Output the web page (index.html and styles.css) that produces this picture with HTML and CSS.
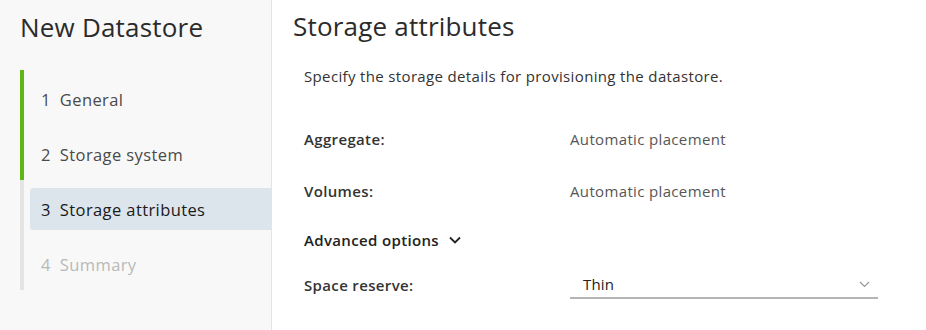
FILE: index.html
```html
<!DOCTYPE html>
<html>
<head>
<meta charset="utf-8">
<link rel="stylesheet" href="styles.css">
</head>
<body>
<div class="wizard">
  <aside class="sidebar">
    <h1 class="wiz-title">New Datastore</h1>
    <ol class="steps">
      <li class="step done"><span class="num">1</span>General</li>
      <li class="step done"><span class="num">2</span>Storage system</li>
      <li class="step active"><span class="num">3</span>Storage attributes</li>
      <li class="step todo"><span class="num">4</span>Summary</li>
    </ol>
  </aside>
  <main class="content">
    <h2 class="page-title">Storage attributes</h2>
    <p class="desc">Specify the storage details for provisioning the datastore.</p>
    <div class="row r-agg">
      <div class="label">Aggregate:</div>
      <div class="value">Automatic placement</div>
    </div>
    <div class="row r-vol">
      <div class="label">Volumes:</div>
      <div class="value">Automatic placement</div>
    </div>
    <div class="advanced">Advanced options
      <svg class="chev" width="12" height="8" viewBox="0 0 12 8"><path d="M1 1.5 L6 6.5 L11 1.5" fill="none" stroke="#222" stroke-width="1.8"/></svg>
    </div>
    <div class="row select-row">
      <div class="label">Space reserve:</div>
      <div class="select">
        <span>Thin</span>
        <svg width="11" height="7" viewBox="0 0 11 7"><path d="M1 1 L5.5 5.5 L10 1" fill="none" stroke="#999" stroke-width="1.2"/></svg>
      </div>
    </div>
  </main>
</div>
</body>
</html>
```
FILE: styles.css
```css
html, body {
  margin: 0;
  padding: 0;
  background: #fff;
}
body {
  font-family: "Open Sans", "Liberation Sans", sans-serif;
  color: #333;
}
.wizard {
  display: flex;
  width: 926px;
  height: 330px;
  overflow: hidden;
}
.sidebar {
  width: 272px;
  flex: none;
  background: #f8f8f8;
  border-right: 1px solid #e4e4e4;
  padding-top: 10px;
  box-sizing: border-box;
}
.wiz-title {
  margin: 0 0 0 20px;
  font-weight: 400;
  font-size: 26px;
  letter-spacing: 0.2px;
  line-height: 34px;
  color: #2b2b2b;
}
.steps {
  list-style: none;
  margin: 26px 0 0 20px;
  padding: 8px 0 5px 6px;
  border-left: 4px solid #e4e4e4;
  position: relative;
}
.steps::before {
  content: "";
  position: absolute;
  left: -4px;
  top: 0;
  width: 4px;
  height: 110px;
  background: #5eb715;
}
.step {
  height: 42px;
  margin-bottom: 13px;
  display: flex;
  align-items: center;
  padding-left: 11px;
  font-size: 16.5px;
  color: #4a4a4a;
  letter-spacing: 0.4px;
}
.num {
  margin-right: 9px;
}
.step.active {
  background: #dde5ec;
  color: #1a1a1a;
  border-radius: 3px 0 0 3px;
  font-weight: 500;
}
.step.todo {
  color: #b9b9b9;
  margin-bottom: 0;
}
.content {
  flex: 1;
  padding: 10px 0 0 21px;
}
.page-title {
  margin: 0;
  font-weight: 400;
  font-size: 26px;
  letter-spacing: 0.2px;
  line-height: 32px;
  color: #2b2b2b;
}
.desc {
  margin: 24px 0 0 11px;
  font-size: 15px;
  letter-spacing: 0.35px;
  color: #333;
  line-height: 20px;
}
.row {
  display: flex;
  align-items: center;
  margin-left: 11px;
  height: 20px;
  font-size: 15px;
  letter-spacing: 0.35px;
}
.r-agg { margin-top: 43px; }
.r-vol { margin-top: 32px; }
.label {
  width: 266px;
  font-weight: 600;
  color: #333;
}
.value {
  color: #565656;
}
.advanced {
  margin: 29px 0 0 11px;
  font-size: 15px;
  letter-spacing: 0.35px;
  font-weight: 600;
  color: #222;
  line-height: 20px;
  display: flex;
  align-items: center;
  gap: 10px;
}
.select-row {
  margin-top: 21px;
  height: 28px;
}
.select {
  width: 308px;
  height: 28px;
  box-sizing: border-box;
  border-bottom: 2px solid #b5b5b5;
  display: flex;
  align-items: center;
  justify-content: space-between;
  padding: 0 8px 0 13px;
  color: #222;
  font-size: 15px;
  letter-spacing: 0.2px;
}
```
